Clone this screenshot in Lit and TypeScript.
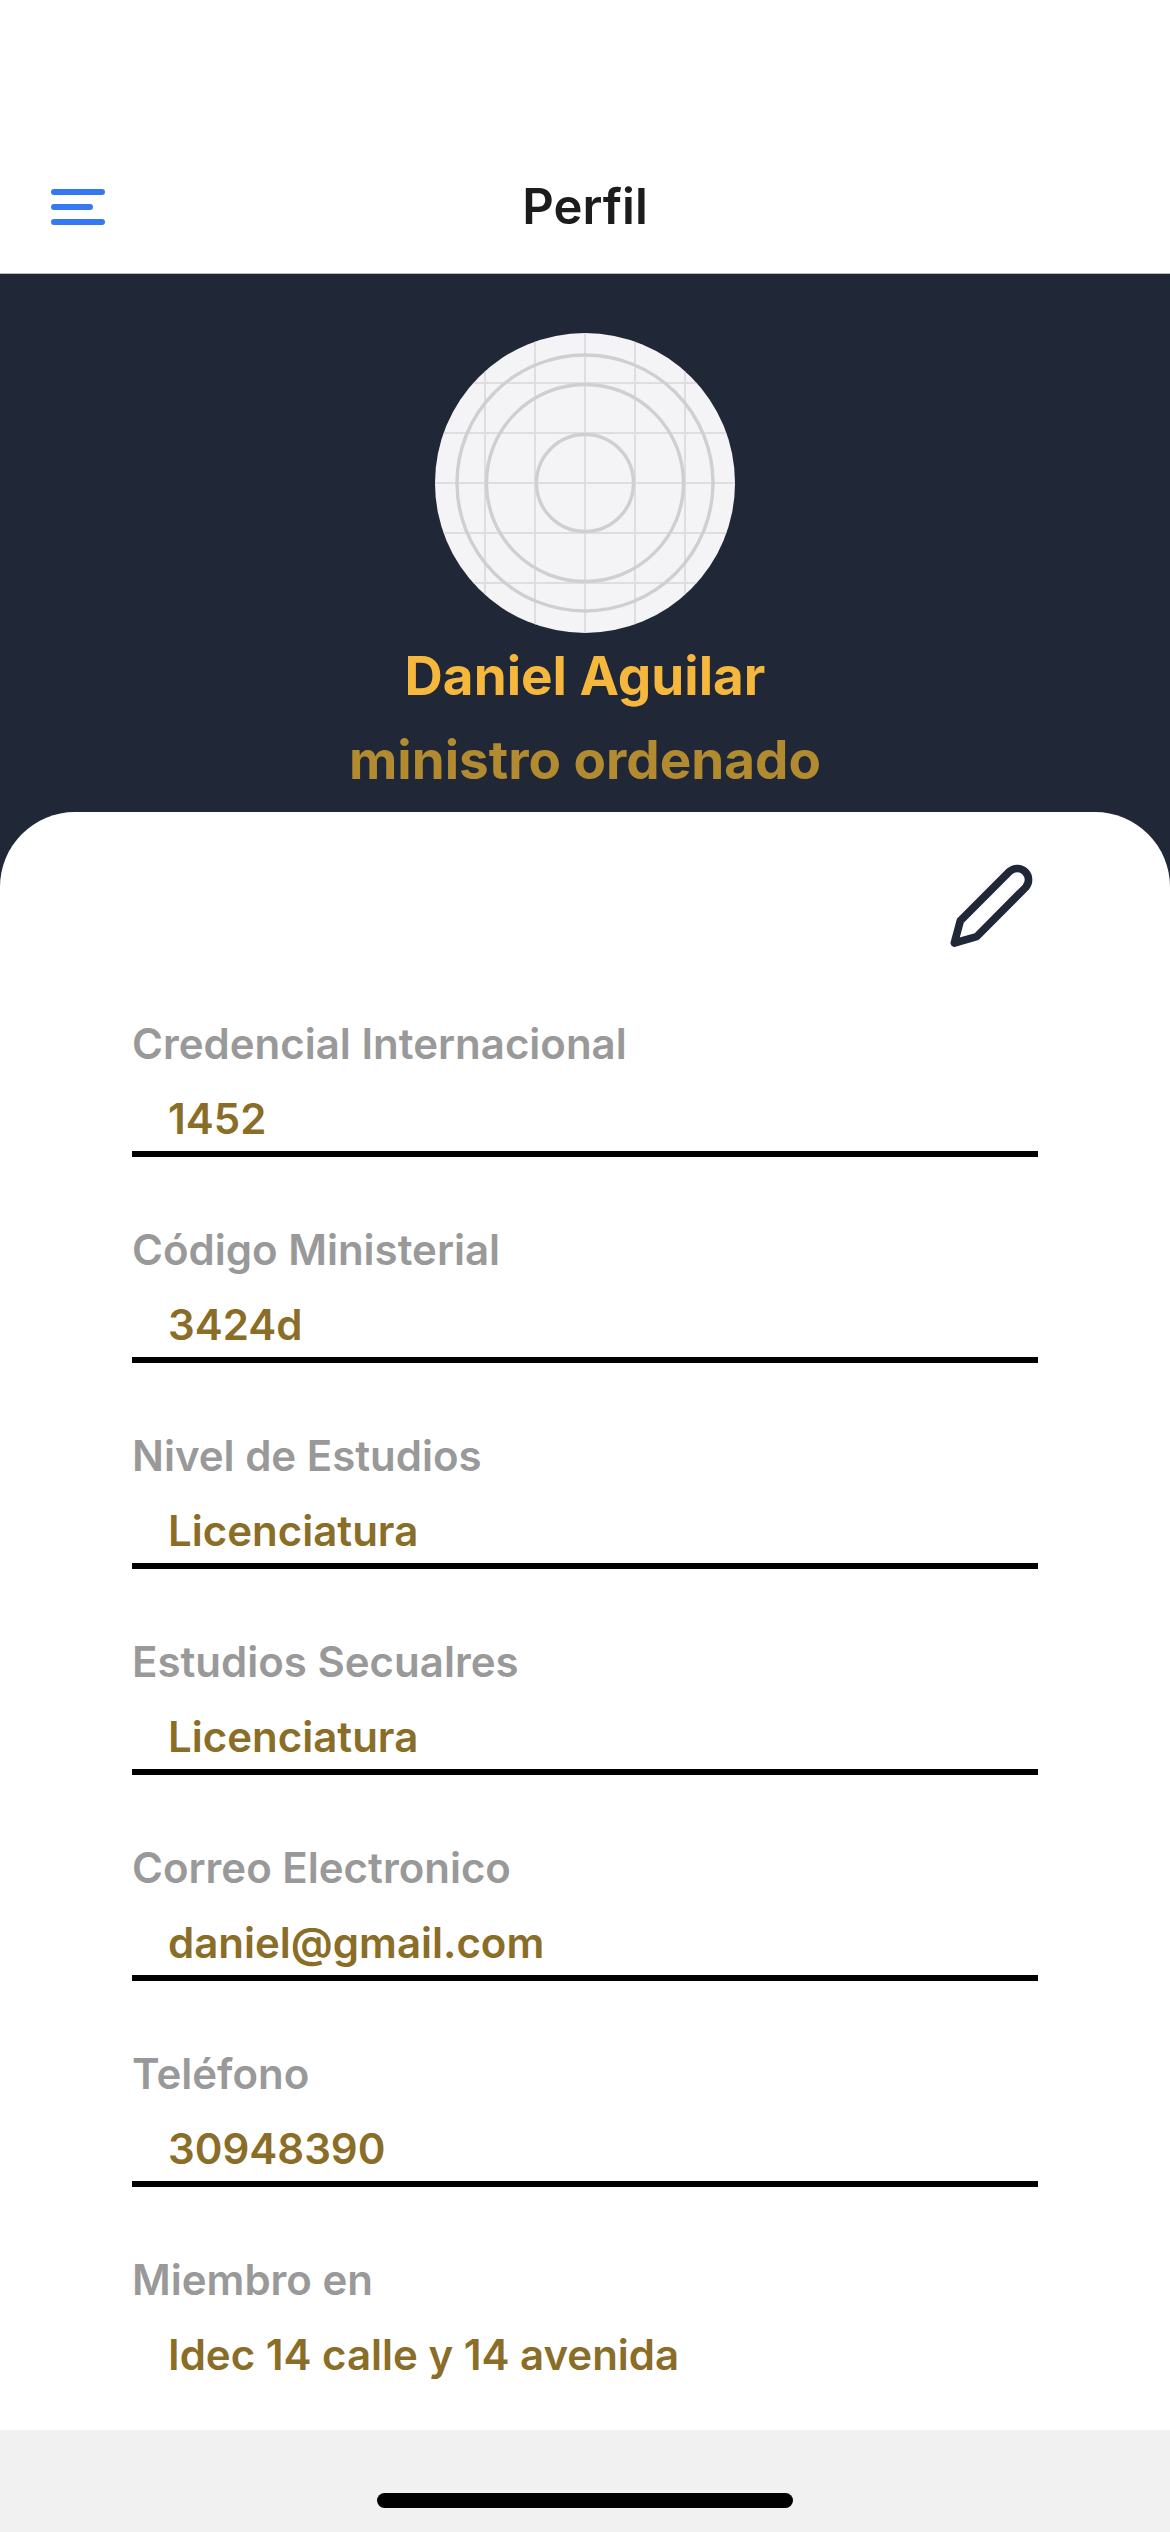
import { LitElement, html, css, svg } from "lit";
import { customElement, property } from "lit/decorators.js";

interface Field {
  id: string;
  label: string;
  value: string;
  type: string;
}

const FIELDS: Field[] = [
  { id: "credencial", label: "Credencial Internacional", value: "1452", type: "text" },
  { id: "codigo", label: "Código Ministerial", value: "3424d", type: "text" },
  { id: "nivel", label: "Nivel de Estudios", value: "Licenciatura", type: "text" },
  { id: "estudios", label: "Estudios Secualres", value: "Licenciatura", type: "text" },
  { id: "correo", label: "Correo Electronico", value: "daniel@gmail.com", type: "email" },
  { id: "telefono", label: "Teléfono", value: "30948390", type: "tel" },
  { id: "miembro", label: "Miembro en", value: "Idec 14 calle y 14 avenida", type: "text" },
];

@customElement("profile-avatar")
export class ProfileAvatar extends LitElement {
  static styles = css`
    :host {
      display: block;
      width: 300px;
      height: 300px;
      border-radius: 50%;
      overflow: hidden;
      background: #f4f4f7;
    }
    .art {
      display: block;
      width: 100%;
      height: 100%;
      fill: none;
    }
    .grid {
      stroke: #dedee1;
      stroke-width: 2;
    }
    .rings {
      stroke: #cfcfd3;
      stroke-width: 3.4;
    }
  `;

  render() {
    const steps = [50, 100, 150, 200, 250];
    return html`
      <svg class="art" viewBox="0 0 300 300" aria-hidden="true">
        <g class="grid">
          ${steps.map((p) => svg`<path d="M${p} 0V300M0 ${p}H300" />`)}
        </g>
        <g class="rings">
          ${[48.5, 98.5, 128].map((r) => svg`<circle cx="150" cy="150" r=${r} />`)}
        </g>
      </svg>
    `;
  }
}

@customElement("profile-fields")
export class ProfileFields extends LitElement {
  @property({ attribute: false }) fields: Field[] = [];

  static styles = css`
    :host {
      display: flex;
      flex-direction: column;
      gap: 68px;
    }
    .field {
      display: flex;
      flex-direction: column;
      font: 600 42px/50px Inter, "Liberation Sans", sans-serif;
    }
    .label {
      color: #999999;
    }
    .value {
      box-sizing: content-box;
      height: 50px;
      margin: 0;
      padding: 25px 0 7px 36px;
      border: 0;
      border-bottom: 6px solid #000000;
      border-radius: 0;
      outline: none;
      background: transparent;
      color: #8a6d26;
      font: inherit;
    }
    .field:last-child .value {
      border-color: transparent;
    }
  `;

  render() {
    return this.fields.map(
      (f) => html`
        <div class="field">
          <label class="label" for=${f.id}>${f.label}</label>
          <input class="value" id=${f.id} type=${f.type} .value=${f.value} readonly />
        </div>
      `
    );
  }
}

@customElement("app-root")
export class AppRoot extends LitElement {
  static styles = css`
    :host {
      display: flex;
      flex-direction: column;
      min-height: 100vh;
      background: #202736;
      font-family: Inter, "Liberation Sans", sans-serif;
    }
    .header {
      display: grid;
      grid-template-columns: 1fr auto 1fr;
      align-items: center;
      height: 132px;
      padding: 141px 51px 0;
      border-bottom: 1px solid #b9bbbf;
      background: #ffffff;
    }
    .icon-button {
      display: block;
      margin: 0;
      padding: 0;
      border: 0;
      background: none;
      cursor: pointer;
    }
    .menu {
      justify-self: start;
    }
    .menu-icon {
      display: block;
      width: 54px;
      height: 36px;
      fill: #3478f6;
    }
    .title {
      margin: 0;
      color: #1c1c1c;
      font-size: 49px;
      font-weight: 600;
      line-height: 60px;
    }
    .hero {
      display: flex;
      flex-direction: column;
      align-items: center;
      padding: 59px 48px 10px;
      font-size: 53px;
      font-weight: 700;
      line-height: 84px;
      text-align: center;
    }
    .name {
      margin: 1px 0 0;
      color: #f5b83d;
      font: inherit;
    }
    .role {
      margin: 0;
      color: #b28b30;
    }
    .card {
      display: flex;
      flex: 1;
      flex-direction: column;
      padding: 48px 132px 0;
      border-radius: 75px 75px 0 0;
      background: #ffffff;
    }
    .edit {
      align-self: flex-end;
      margin-bottom: 69px;
    }
    .edit-icon {
      display: block;
      width: 90px;
      height: 90px;
      fill: none;
      stroke: #202736;
      stroke-width: 23;
      stroke-linejoin: round;
    }
    .footer {
      display: flex;
      justify-content: center;
      padding: 63px 0 24px;
      background: #f1f1f1;
    }
    .indicator {
      width: 416px;
      height: 15px;
      border-radius: 8px;
      background: #000000;
    }
  `;

  render() {
    return html`
      <header class="header">
        <button class="icon-button menu" aria-label="Menú">
          <svg class="menu-icon" viewBox="0 0 54 36" aria-hidden="true">
            <rect width="54" height="6" rx="3" />
            <rect y="15" width="42" height="6" rx="3" />
            <rect y="30" width="54" height="6" rx="3" />
          </svg>
        </button>
        <h1 class="title">Perfil</h1>
      </header>
      <section class="hero">
        <profile-avatar></profile-avatar>
        <h2 class="name">Daniel Aguilar</h2>
        <p class="role">ministro ordenado</p>
      </section>
      <main class="card">
        <button class="icon-button edit" aria-label="Editar">
          <svg class="edit-icon" viewBox="0 0 270 270" aria-hidden="true">
            <path d="M19 249L37 182L185 34A34 34 0 0 1 233 82L86 230Z" />
          </svg>
        </button>
        <profile-fields .fields=${FIELDS}></profile-fields>
      </main>
      <footer class="footer"><div class="indicator"></div></footer>
    `;
  }
}
